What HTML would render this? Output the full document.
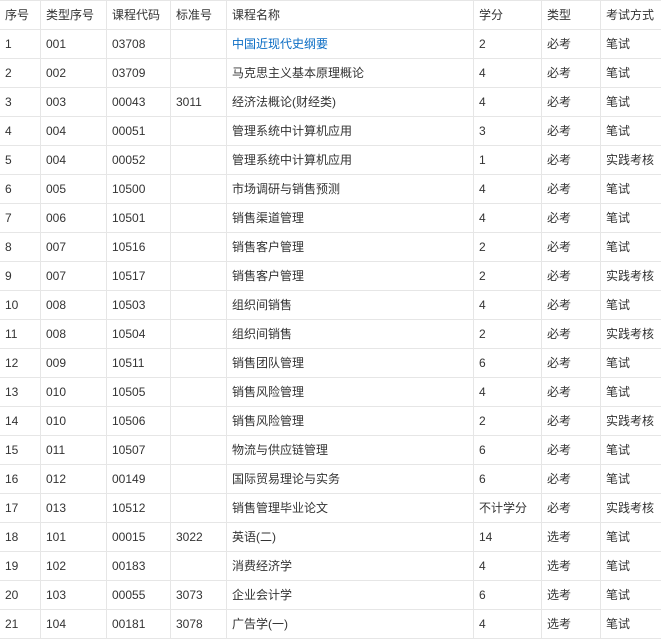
<!DOCTYPE html>
<html><head><meta charset="utf-8"><style>
body{margin:0;background:#fff;overflow:hidden;width:661px;height:639px}
table{border-collapse:collapse;table-layout:fixed;width:680px;position:absolute;left:-1px;top:0;font-family:"Liberation Sans","Noto Sans CJK SC",sans-serif;font-size:12px;color:#333}
td{border:1px solid #e6e6e6;height:28px;padding:0 0 0 5px;white-space:nowrap;overflow:hidden;line-height:28px}
a{color:#0a6cc4;text-decoration:none}
</style></head><body>
<table>
<colgroup><col style="width:41px"><col style="width:66px"><col style="width:64px"><col style="width:56px"><col style="width:247px"><col style="width:68px"><col style="width:59px"><col style="width:79px"></colgroup>
<tr><td>序号</td><td>类型序号</td><td>课程代码</td><td>标准号</td><td>课程名称</td><td>学分</td><td>类型</td><td>考试方式</td></tr>
<tr><td>1</td><td>001</td><td>03708</td><td></td><td><a>中国近现代史纲要</a></td><td>2</td><td>必考</td><td>笔试</td></tr>
<tr><td>2</td><td>002</td><td>03709</td><td></td><td>马克思主义基本原理概论</td><td>4</td><td>必考</td><td>笔试</td></tr>
<tr><td>3</td><td>003</td><td>00043</td><td>3011</td><td>经济法概论(财经类)</td><td>4</td><td>必考</td><td>笔试</td></tr>
<tr><td>4</td><td>004</td><td>00051</td><td></td><td>管理系统中计算机应用</td><td>3</td><td>必考</td><td>笔试</td></tr>
<tr><td>5</td><td>004</td><td>00052</td><td></td><td>管理系统中计算机应用</td><td>1</td><td>必考</td><td>实践考核</td></tr>
<tr><td>6</td><td>005</td><td>10500</td><td></td><td>市场调研与销售预测</td><td>4</td><td>必考</td><td>笔试</td></tr>
<tr><td>7</td><td>006</td><td>10501</td><td></td><td>销售渠道管理</td><td>4</td><td>必考</td><td>笔试</td></tr>
<tr><td>8</td><td>007</td><td>10516</td><td></td><td>销售客户管理</td><td>2</td><td>必考</td><td>笔试</td></tr>
<tr><td>9</td><td>007</td><td>10517</td><td></td><td>销售客户管理</td><td>2</td><td>必考</td><td>实践考核</td></tr>
<tr><td>10</td><td>008</td><td>10503</td><td></td><td>组织间销售</td><td>4</td><td>必考</td><td>笔试</td></tr>
<tr><td>11</td><td>008</td><td>10504</td><td></td><td>组织间销售</td><td>2</td><td>必考</td><td>实践考核</td></tr>
<tr><td>12</td><td>009</td><td>10511</td><td></td><td>销售团队管理</td><td>6</td><td>必考</td><td>笔试</td></tr>
<tr><td>13</td><td>010</td><td>10505</td><td></td><td>销售风险管理</td><td>4</td><td>必考</td><td>笔试</td></tr>
<tr><td>14</td><td>010</td><td>10506</td><td></td><td>销售风险管理</td><td>2</td><td>必考</td><td>实践考核</td></tr>
<tr><td>15</td><td>011</td><td>10507</td><td></td><td>物流与供应链管理</td><td>6</td><td>必考</td><td>笔试</td></tr>
<tr><td>16</td><td>012</td><td>00149</td><td></td><td>国际贸易理论与实务</td><td>6</td><td>必考</td><td>笔试</td></tr>
<tr><td>17</td><td>013</td><td>10512</td><td></td><td>销售管理毕业论文</td><td>不计学分</td><td>必考</td><td>实践考核</td></tr>
<tr><td>18</td><td>101</td><td>00015</td><td>3022</td><td>英语(二)</td><td>14</td><td>选考</td><td>笔试</td></tr>
<tr><td>19</td><td>102</td><td>00183</td><td></td><td>消费经济学</td><td>4</td><td>选考</td><td>笔试</td></tr>
<tr><td>20</td><td>103</td><td>00055</td><td>3073</td><td>企业会计学</td><td>6</td><td>选考</td><td>笔试</td></tr>
<tr><td>21</td><td>104</td><td>00181</td><td>3078</td><td>广告学(一)</td><td>4</td><td>选考</td><td>笔试</td></tr>
</table>
</body></html>
